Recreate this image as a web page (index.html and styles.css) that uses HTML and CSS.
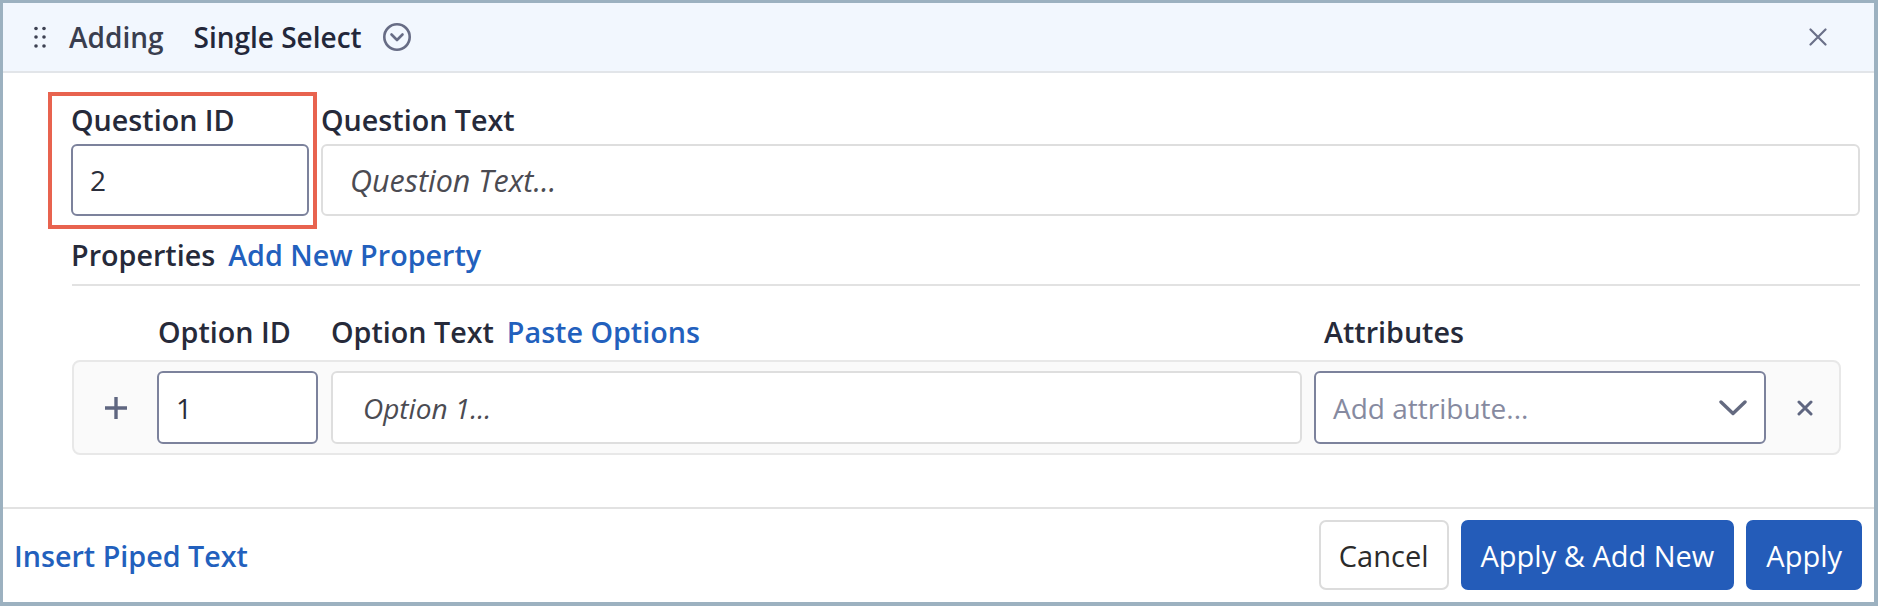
FILE: index.html
```html
<!DOCTYPE html>
<html lang="en">
<head>
<meta charset="utf-8">
<title>Adding Single Select</title>
<link rel="stylesheet" href="styles.css">
</head>
<body>
<div class="dialog">
  <header class="dlg-header">
    <svg class="drag" width="14" height="22" viewBox="0 0 14 22" aria-hidden="true">
      <circle cx="2" cy="2.5" r="1.8"/><circle cx="10" cy="2.5" r="1.8"/>
      <circle cx="2" cy="11" r="1.8"/><circle cx="10" cy="11" r="1.8"/>
      <circle cx="2" cy="20" r="1.8"/><circle cx="10" cy="20" r="1.8"/>
    </svg>
    <span class="mode">Adding</span>
    <span class="qtype">Single Select</span>
    <svg class="type-toggle" width="30" height="30" viewBox="0 0 30 30" aria-hidden="true">
      <circle cx="15" cy="15" r="12.7" fill="none" stroke="#676c85" stroke-width="2.6"/>
      <path d="M9.5 12.5 L15 18 L20.5 12.5" fill="none" stroke="#676c85" stroke-width="2.6" stroke-linecap="round" stroke-linejoin="round"/>
    </svg>
    <span class="spacer"></span>
    <svg class="close" width="18" height="18" viewBox="0 0 18 18" aria-hidden="true">
      <path d="M1.5 1.5 L16.5 16.5 M16.5 1.5 L1.5 16.5" stroke="#6b7089" stroke-width="2.2" stroke-linecap="round"/>
    </svg>
  </header>

  <main class="dlg-body">
    <div class="q-row">
      <div class="field qid-field">
        <label class="lbl">Question ID</label>
        <div class="input input-strong"><span class="val">2</span></div>
      </div>
      <div class="field qtext-field">
        <label class="lbl">Question Text</label>
        <div class="input input-light"><span class="ph ph-q">Question Text...</span></div>
      </div>
    </div>

    <div class="props">
      <span class="lbl">Properties</span>
      <a class="link">Add New Property</a>
    </div>
    <div class="divider"></div>

    <div class="opt-head">
      <span></span>
      <span class="lbl col-id">Option ID</span>
      <span class="col-text"><span class="lbl">Option Text</span><a class="link">Paste Options</a></span>
      <span class="lbl col-attr">Attributes</span>
      <span></span>
    </div>

    <div class="opt-row">
      <span class="icon-cell">
        <svg width="24" height="24" viewBox="0 0 24 24" aria-hidden="true">
          <path d="M12 1 V23 M1 12 H23" stroke="#5f6680" stroke-width="3.4"/>
        </svg>
      </span>
      <div class="input input-strong"><span class="val">1</span></div>
      <div class="input input-light opt-text"><span class="ph ph-opt">Option 1...</span></div>
      <div class="input input-strong select">
        <span class="attr-ph">Add attribute...</span>
        <svg width="28" height="16" viewBox="0 0 28 16" aria-hidden="true">
          <path d="M2 2 L14 13.5 L26 2" fill="none" stroke="#646a80" stroke-width="3.4" stroke-linecap="round" stroke-linejoin="round"/>
        </svg>
      </div>
      <span class="icon-cell remove">
        <svg width="16" height="16" viewBox="0 0 16 16" aria-hidden="true">
          <path d="M2 2 L14 14 M14 2 L2 14" stroke="#5f6680" stroke-width="3" stroke-linecap="round"/>
        </svg>
      </span>
    </div>
  </main>

  <footer class="dlg-footer">
    <a class="link piped">Insert Piped Text</a>
    <span class="spacer"></span>
    <button class="btn btn-secondary">Cancel</button>
    <button class="btn btn-primary">Apply &amp; Add New</button>
    <button class="btn btn-primary">Apply</button>
  </footer>
</div>
</body>
</html>
```

FILE: styles.css
```css
* { box-sizing: border-box; }

html, body {
  margin: 0;
  padding: 0;
  background: #ffffff;
}

body {
  font-family: "Open Sans", "Noto Sans", "Liberation Sans", sans-serif;
  color: #262a3a;
}

.dialog {
  width: 1878px;
  height: 606px;
  border-style: solid;
  border-color: #9cb1c0;
  border-width: 3px 4px 4px 3px;
  display: flex;
  flex-direction: column;
  background: #fff;
}

/* header */
.dlg-header {
  height: 70px;
  flex: none;
  background: #f2f7fe;
  border-bottom: 2px solid #e2e5e9;
  display: flex;
  align-items: center;
  padding: 0 47px 0 31px;
}

.drag { fill: #3d4152; margin-right: 21px; }

.mode {
  font-size: 28px;
  font-weight: 600;
  color: #3a3e4f;
  margin-right: 30px;
}

.qtype {
  font-size: 28px;
  font-weight: 600;
  color: #23273a;
  margin-right: 20px;
}

.type-toggle { display: block; }

.spacer { flex: 1; }

.close { display: block; }

/* body */
.dlg-body {
  flex: 1;
  padding: 29px 14px 0 68px;
}

.lbl {
  font-size: 28.7px;
  font-weight: 600;
  line-height: 36px;
  color: #262a3a;
  white-space: nowrap;
}

.link {
  font-size: 28.7px;
  font-weight: 600;
  line-height: 36px;
  color: #2260bd;
  cursor: pointer;
  white-space: nowrap;
}

.q-row {
  display: flex;
  gap: 12px;
}

.field {
  display: flex;
  flex-direction: column;
  gap: 6px;
}

.qid-field {
  width: 238px;
  flex: none;
  position: relative;
}

.qid-field::after {
  content: "";
  position: absolute;
  top: -10px;
  bottom: -13px;
  left: -23px;
  right: -8px;
  border: 4px solid #e8634f;
  pointer-events: none;
}

.qtext-field { flex: 1; }

.input {
  height: 72px;
  border-radius: 6px;
  background: #fff;
  display: flex;
  align-items: center;
  font-size: 28px;
}

.input-strong {
  border: 2px solid #7c829c;
  padding-left: 17px;
}

.input-light {
  border: 2px solid #dedede;
  padding-left: 27px;
}

.val { color: #2a2d3a; }

.ph {
  font-style: italic;
  color: #4b4b52;
}

.ph-q { font-size: 30.5px; }

.ph-opt { padding-left: 3px; }

.props {
  margin-top: 21px;
  padding-left: 0;
  display: flex;
  gap: 13px;
}

.divider {
  margin: 11px 0 0 1px;
  height: 2px;
  background: #e2e2e2;
}

.opt-head, .opt-row {
  display: grid;
  grid-template-columns: 83px 161px 984px 464px 1fr;
}

.opt-head {
  margin: 28px 19px 0 1px;
  padding-left: 2px;
}

.col-id { padding-left: 1px; }
.col-text { margin-left: 13px; display: flex; gap: 13px; }
.col-attr { padding-left: 22px; }

.opt-row {
  margin: 10px 19px 0 1px;
  border: 2px solid #e8e8e8;
  border-radius: 8px;
  background: #fafafa;
  padding: 9px 0;
  align-items: center;
}

.opt-row .input { height: 73px; }

.opt-row .opt-text { margin-left: 13px; }

.opt-row .select { margin-left: 12px; justify-content: space-between; padding-right: 17px; }

.attr-ph { color: #868aa0; font-size: 28px; }

.icon-cell {
  display: flex;
  justify-content: center;
  align-items: center;
}

.icon-cell svg { display: block; }

.opt-row .remove { padding-left: 5px; }

/* footer */
.dlg-footer {
  flex: none;
  height: 95px;
  border-top: 2px solid #e2e2e2;
  display: flex;
  align-items: center;
  gap: 12px;
  padding: 11px 12px 12px 11px;
}

.piped { margin-top: 2px; }

.btn {
  height: 70px;
  font-family: inherit;
  font-size: 29px;
  font-weight: 500;
  border-radius: 7px;
  padding: 0 18px;
  cursor: pointer;
}

.btn-secondary {
  background: #fff;
  border: 2px solid #dcdcdc;
  color: #2b2b2b;
}

.btn-primary {
  background: #245cb9;
  border: 2px solid #245cb9;
  color: #ffffff;
}
```
